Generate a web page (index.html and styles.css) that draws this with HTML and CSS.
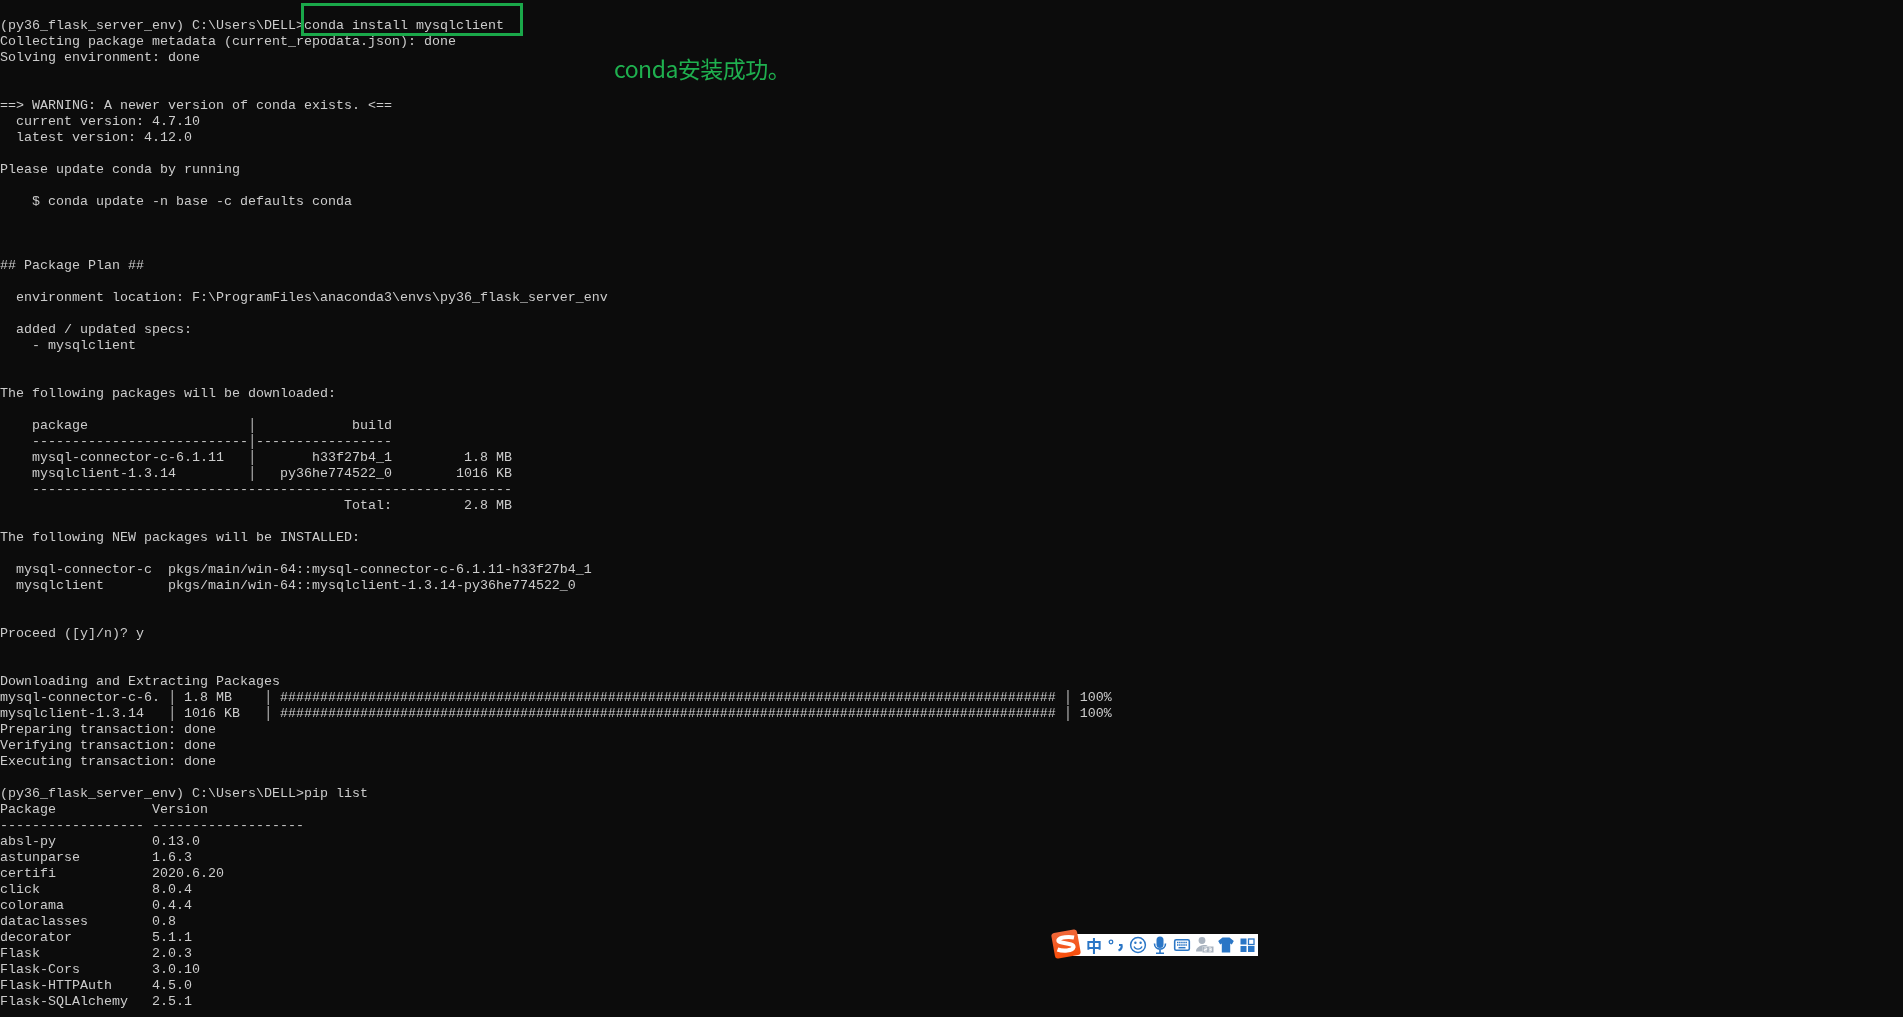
FILE: index.html
```html
<!DOCTYPE html>
<html lang="en">
<head>
<meta charset="utf-8">
<title>conda install mysqlclient</title>
<link rel="stylesheet" href="styles.css">
</head>
<body>
<main class="console">
<pre class="output">

(py36_flask_server_env) C:\Users\DELL&gt;conda install mysqlclient
Collecting package metadata (current_repodata.json): done
Solving environment: done


==&gt; WARNING: A newer version of conda exists. &lt;==
  current version: 4.7.10
  latest version: 4.12.0

Please update conda by running

    $ conda update -n base -c defaults conda



## Package Plan ##

  environment location: F:\ProgramFiles\anaconda3\envs\py36_flask_server_env

  added / updated specs:
    - mysqlclient


The following packages will be downloaded:

    package                    │            build
    ---------------------------│-----------------
    mysql-connector-c-6.1.11   │       h33f27b4_1         1.8 MB
    mysqlclient-1.3.14         │   py36he774522_0        1016 KB
    ------------------------------------------------------------
                                           Total:         2.8 MB

The following NEW packages will be INSTALLED:

  mysql-connector-c  pkgs/main/win-64::mysql-connector-c-6.1.11-h33f27b4_1
  mysqlclient        pkgs/main/win-64::mysqlclient-1.3.14-py36he774522_0


Proceed ([y]/n)? y


Downloading and Extracting Packages
mysql-connector-c-6. │ 1.8 MB    │ ################################################################################################# │ 100%
mysqlclient-1.3.14   │ 1016 KB   │ ################################################################################################# │ 100%
Preparing transaction: done
Verifying transaction: done
Executing transaction: done

(py36_flask_server_env) C:\Users\DELL&gt;pip list
Package            Version
------------------ -------------------
absl-py            0.13.0
astunparse         1.6.3
certifi            2020.6.20
click              8.0.4
colorama           0.4.4
dataclasses        0.8
decorator          5.1.1
Flask              2.0.3
Flask-Cors         3.0.10
Flask-HTTPAuth     4.5.0
Flask-SQLAlchemy   2.5.1
</pre>
<div class="highlight"></div>
<p class="note">conda安装成功。</p>
<div class="ime">
  <svg class="ime-logo" width="30" height="30" viewBox="0 0 30 30">
    <defs><linearGradient id="logoFill" x1="0" y1="0" x2="0" y2="1"><stop offset="0" stop-color="#f0683a"/><stop offset="1" stop-color="#f74d0a"/></linearGradient></defs>
    <rect x="2" y="2" width="26" height="26" rx="3" fill="url(#logoFill)" transform="rotate(-10 15 15)"/>
    <path d="M23 8.5 C18 7.5 9 8 7.5 11 C6.5 15 22.5 13.5 22.5 18 C21.5 22 12 22.5 6.5 20.5" fill="none" stroke="#fff" stroke-width="4.2" stroke-linecap="butt"/>
  </svg>
  <span class="ime-slot ime-zh">中</span>
  <svg class="ime-slot" viewBox="0 0 22 22"><circle cx="6" cy="8" r="1.8" fill="none" stroke="#2a76c6" stroke-width="1.3"/><path d="M14 11 L16.5 11 C17 13 16 15.5 13.5 16.5" fill="none" stroke="#2a76c6" stroke-width="2.2"/></svg>
  <svg class="ime-slot" viewBox="0 0 22 22"><circle cx="11" cy="11" r="7.4" fill="none" stroke="#2a76c6" stroke-width="1.5"/><circle cx="8.4" cy="8.8" r="1.2" fill="#2a76c6"/><circle cx="13.6" cy="8.8" r="1.2" fill="#2a76c6"/><path d="M7 12.5 C8.5 16 13.5 16 15 12.5" fill="none" stroke="#2a76c6" stroke-width="1.4"/></svg>
  <svg class="ime-slot" viewBox="0 0 22 22"><rect x="7.5" y="2.5" width="7" height="11.5" rx="3.5" fill="#2a76c6"/><path d="M5.5 9.5 C5.5 17 16.5 17 16.5 9.5 M11 15 V19 M7 19.2 H15" fill="none" stroke="#2a76c6" stroke-width="1.6"/></svg>
  <svg class="ime-slot" viewBox="0 0 22 22"><rect x="3.7" y="5.7" width="14.6" height="10.6" rx="1.5" fill="none" stroke="#2a76c6" stroke-width="1.6"/><path d="M6 8.6 H16 M6 11 H16" stroke="#2a76c6" stroke-width="1.5" stroke-dasharray="1.5 .6"/><path d="M7.5 13.7 H14.5" stroke="#2a76c6" stroke-width="1.5"/></svg>
  <svg class="ime-slot" viewBox="0 0 22 22"><circle cx="9" cy="6.5" r="3.4" fill="#a9b3bf"/><path d="M3 17.5 C3 11 14 10 14.5 12 L9.5 12.5 V17.5 Z" fill="#a9b3bf"/><rect x="9.5" y="12.5" width="11" height="6" fill="#a9b3bf"/><path d="M11.3 14 H13.7 V15.5 H11.3 V17 H13.7 M15.8 14 H18.2 V17 H15.8 M16.3 15.5 H18.2" fill="none" stroke="#fff" stroke-width=".9"/></svg>
  <svg class="ime-slot" viewBox="0 0 22 22"><path d="M7.5 3.5 L14.5 3.5 L18.8 7 L16.8 10.5 L15.2 9.5 V18.5 H6.8 V9.5 L5.2 10.5 L3.2 7 Z" fill="#2a76c6"/></svg>
  <svg class="ime-slot ime-grid" viewBox="0 0 22 22"><rect x="4.5" y="4.5" width="6" height="6" fill="#2a76c6"/><rect x="12.5" y="5" width="5.5" height="5.5" fill="none" stroke="#2a76c6" stroke-width="1.3"/><rect x="4.5" y="12" width="6" height="6" fill="#2a76c6"/><rect x="12" y="12" width="6.5" height="6" fill="#2a76c6"/></svg>
</div>
</main>
</body>
</html>
```
FILE: styles.css
```css
html, body {
  margin: 0;
  height: 100%;
  overflow: hidden;
  background: #0c0c0c;
}

.console {
  position: relative;
  height: 1017px;
  overflow: hidden;
  background: #0c0c0c;
}

.output {
  margin: 0;
  padding-top: 2px;
  color: #cccccc;
  font-family: "Liberation Mono", monospace;
  font-size: 13.333px;
  line-height: 16px;
  white-space: pre;
  will-change: transform;
}

.highlight {
  position: absolute;
  left: 301px;
  top: 3px;
  width: 216px;
  height: 27px;
  border: 3px solid #1aa84a;
}

.note {
  position: absolute;
  left: 614px;
  top: 50px;
  margin: 0;
  color: #1fb04f;
  font-family: "Noto Sans CJK SC", sans-serif;
  font-size: 23px;
  font-weight: 400;
  line-height: 36px;
  letter-spacing: -0.5px;
}

.ime {
  position: absolute;
  left: 1073px;
  top: 934px;
  box-sizing: border-box;
  width: 185px;
  height: 22px;
  padding-left: 10px;
  display: flex;
  background: #ffffff;
}

.ime-logo {
  position: absolute;
  left: -22px;
  top: -5px;
}

.ime-slot {
  flex: none;
  width: 22px;
  height: 22px;
}

.ime-grid {
  margin-left: -1px;
}

.ime-zh {
  color: #2a76c6;
  font-family: "Noto Sans CJK SC", sans-serif;
  font-size: 16px;
  font-weight: 700;
  line-height: 22px;
  text-align: center;
}
```
